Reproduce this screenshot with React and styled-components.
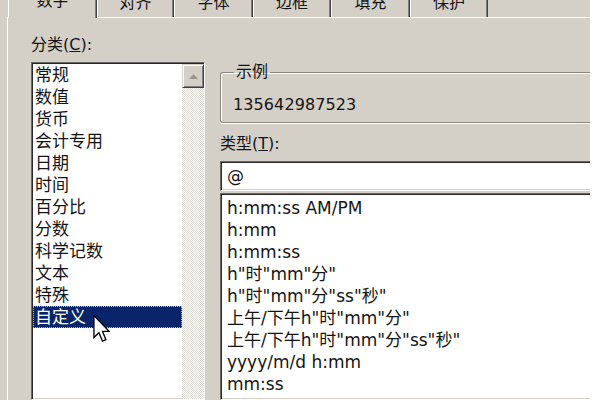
import React from 'react';
import styled, { createGlobalStyle } from 'styled-components';

const GlobalStyle = createGlobalStyle`
  body {
    margin: 0;
    background: #fff;
    overflow: hidden;
  }
`;

const uiFont = `"DejaVu Sans", "Noto Sans CJK SC", sans-serif`;

const Window = styled.div`
  width: 590px;
  height: 420px;
  margin-top: -20px;
  padding-left: 7px;
  box-sizing: border-box;
  background: #d4d0c8;
  display: flex;
  flex-direction: column;
  overflow: hidden;
  font-family: ${uiFont};
  color: #141414;
`;

const TabBar = styled.div`
  height: 37px;
  display: flex;
  align-items: flex-end;
  padding-left: 1px;
  border-bottom: 1px solid #fff;
  flex-shrink: 0;
`;

const Tab = styled.div`
  width: ${(p) => p.$w}px;
  height: ${(p) => (p.$active ? 33 : 30)}px;
  line-height: 30px;
  box-sizing: border-box;
  text-align: center;
  font-size: 16px;
  background: #d4d0c8;
  border-top: 1px solid #fff;
  border-left: 1px solid #fff;
  border-right: 1px solid #404040;
  box-shadow: inset -1px 0 #808080;
  border-radius: 2px 2px 0 0;
  margin-bottom: ${(p) => (p.$active ? -1 : 0)}px;
`;

const Page = styled.div`
  flex: 1;
  min-height: 0;
  display: flex;
  gap: 15px;
  padding: 17px 0 0 23px;
  border-left: 1px solid #fff;
`;

const LeftCol = styled.div`
  width: 174px;
  display: flex;
  flex-direction: column;
  flex-shrink: 0;
`;

const RightCol = styled.div`
  width: 372px;
  display: flex;
  flex-direction: column;
  flex-shrink: 0;
`;

const Label = styled.div`
  font-size: 16px;
  line-height: 20px;
  height: 20px;
  margin-bottom: ${(p) => p.$mb || 0}px;
  margin-top: ${(p) => p.$mt || 0}px;
  u {
    text-decoration: underline;
  }
`;

const Sunken = styled.div`
  box-sizing: border-box;
  background: #fff;
  border: 1px solid;
  border-color: #6c6a66 #fff #fff #6c6a66;
  box-shadow: inset 1px 1px #2a2a2a, inset -1px -1px #d4d0c8;
`;

const CategoryBox = styled(Sunken)`
  flex: 1;
  min-height: 0;
  display: flex;
  padding: 1px 0 0 1px;
`;

const CategoryItems = styled.div`
  flex: 1;
  position: relative;
`;

const CategoryRow = styled.div`
  height: 22px;
  line-height: 22px;
  padding-left: 2px;
  font-size: 17px;
  background: ${(p) => (p.$selected ? '#0a246a' : 'transparent')};
  color: ${(p) => (p.$selected ? '#fff' : 'inherit')};
  outline: ${(p) => (p.$selected ? '1px dotted #c8c070' : 'none')};
  outline-offset: -1px;
`;

const ScrollTrack = styled.div`
  width: 22px;
  background: repeating-conic-gradient(#fff 0 25%, #dcd9d2 0 50%) 0 0 / 2px 2px;
  display: flex;
  flex-direction: column;
`;

const ScrollButton = styled.div`
  height: 24px;
  box-sizing: border-box;
  background: #d4d0c8;
  border: 1px solid;
  border-color: #d4d0c8 #404040 #404040 #d4d0c8;
  box-shadow: inset 1px 1px #fff, inset -1px -1px #808080;
  display: flex;
  align-items: center;
  justify-content: center;
`;

const Cursor = styled.svg`
  position: absolute;
  left: 60px;
  top: 251px;
`;

const Group = styled.fieldset`
  margin: 28px 0 0 0;
  padding: 14px 0 7px 12px;
  min-width: 0;
  border: 1px solid #8a8780;
  border-right: none;
  border-radius: 3px 0 0 3px;
  box-shadow: inset 1px 1px 0 #fff, 0 1px 0 #fff;
`;

const Legend = styled.legend`
  font-size: 16px;
  line-height: 18px;
  padding: 0 2px;
  margin-left: 1px;
`;

const Sample = styled.div`
  font-size: 16px;
  line-height: 20px;
  letter-spacing: 0.1px;
`;

const TypeInput = styled(Sunken)`
  height: 30px;
  padding-left: 6px;
  font-size: 17px;
  line-height: 28px;
  flex-shrink: 0;
`;

const TypeList = styled(Sunken)`
  flex: 1;
  min-height: 0;
  margin-top: 2px;
  padding: 3px 0 0 6px;
`;

const TypeRow = styled.div`
  height: 22px;
  line-height: 22px;
  font-size: 17px;
  white-space: nowrap;
`;

const tabs = [
  { label: '数字', w: 89, active: true },
  { label: '对齐', w: 77 },
  { label: '字体', w: 79 },
  { label: '边框', w: 78 },
  { label: '填充', w: 79 },
  { label: '保护', w: 78 },
];

const categories = [
  '常规', '数值', '货币', '会计专用', '日期', '时间',
  '百分比', '分数', '科学记数', '文本', '特殊', '自定义',
];

const types = [
  'h:mm:ss AM/PM',
  'h:mm',
  'h:mm:ss',
  'h"时"mm"分"',
  'h"时"mm"分"ss"秒"',
  '上午/下午h"时"mm"分"',
  '上午/下午h"时"mm"分"ss"秒"',
  'yyyy/m/d h:mm',
  'mm:ss',
];

export default function App() {
  return (
    <>
      <GlobalStyle />
      <Window>
        <TabBar>
          {tabs.map((t) => (
            <Tab key={t.label} $w={t.w} $active={t.active}>
              {t.label}
            </Tab>
          ))}
        </TabBar>
        <Page>
          <LeftCol>
            <Label $mb={7}>分类(<u>C</u>):</Label>
            <CategoryBox>
              <CategoryItems>
                {categories.map((c) => (
                  <CategoryRow key={c} $selected={c === '自定义'}>
                    {c}
                  </CategoryRow>
                ))}
                <Cursor width="17" height="27" viewBox="0 0 12.5 20.5">
                  <path
                    d="M0.5 0.5 L0.5 17 L4.3 13.4 L7 19.8 L9.6 18.7 L7 12.4 L12 12.4 Z"
                    fill="#fff"
                    stroke="#000"
                    strokeWidth="1"
                  />
                </Cursor>
              </CategoryItems>
              <ScrollTrack>
                <ScrollButton>
                  <svg width="9" height="5" viewBox="0 0 9 5">
                    <path d="M4.5 0 L9 5 L0 5 Z" fill="#9a9790" />
                  </svg>
                </ScrollButton>
              </ScrollTrack>
            </CategoryBox>
          </LeftCol>
          <RightCol>
            <Group>
              <Legend>示例</Legend>
              <Sample>135642987523</Sample>
            </Group>
            <Label $mt={11} $mb={7}>类型(<u>T</u>):</Label>
            <TypeInput>@</TypeInput>
            <TypeList>
              {types.map((t) => (
                <TypeRow key={t}>{t}</TypeRow>
              ))}
            </TypeList>
          </RightCol>
        </Page>
      </Window>
    </>
  );
}
